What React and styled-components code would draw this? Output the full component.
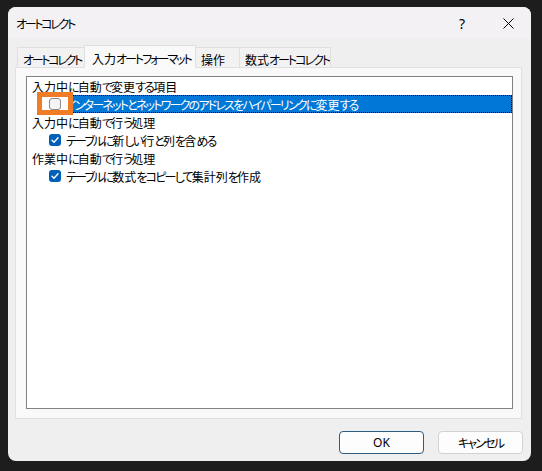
import React from "react";
import styled, { createGlobalStyle } from "styled-components";

const Global = createGlobalStyle`
  html, body { margin: 0; padding: 0; background: #1d1d1d; }
  body {
    font-family: "Noto Sans CJK JP", "Noto Sans", sans-serif;
    font-feature-settings: "palt";
    color: #000;
  }
  * { box-sizing: border-box; }
`;

const Kana = styled.span`
  letter-spacing: ${(p) => p.$ls || -1.8}px;
`;

const Kanji = styled.span`
  letter-spacing: 0;
`;

const Jp = ({ children, ls }) => {
  const parts = String(children).split(/([\u3400-\u9fff々]+)/).filter(Boolean);
  return (
    <Kana $ls={ls}>
      {parts.map((p, i) =>
        /[\u3400-\u9fff々]/.test(p) ? <Kanji key={i}>{p}</Kanji> : <React.Fragment key={i}>{p}</React.Fragment>
      )}
    </Kana>
  );
};

const Window = styled.div`
  margin: 7px 0 0 8px;
  width: 523px;
  height: 454px;
  background: #efefef;
  border-radius: 8px;
  overflow: hidden;
  display: flex;
  flex-direction: column;
`;

const TitleBar = styled.div`
  height: 31px;
  display: flex;
  align-items: center;
  padding: 1px 0 0 8px;
  background: #f3f1f4;
  font-size: 12px;
`;

const TitleText = styled.div`
  flex: 1;
`;

const TitleButton = styled.div`
  width: ${(p) => p.$w}px;
  height: 30px;
  display: flex;
  align-items: center;
  justify-content: center;
  font-family: "Noto Sans", sans-serif;
  font-size: 14px;
`;

const Body = styled.div`
  display: flex;
  flex-direction: column;
  padding: 7px 9px 0 7px;
`;

const TabStrip = styled.div`
  height: 22px;
  display: flex;
  align-items: flex-end;
  padding-left: 2px;
`;

const Tab = styled.div`
  position: relative;
  width: ${(p) => p.$w}px;
  height: ${(p) => (p.$active ? 23 : 20)}px;
  margin-bottom: ${(p) => (p.$active ? -1 : 0)}px;
  margin-left: -1px;
  z-index: ${(p) => (p.$active ? 1 : 0)};
  background: ${(p) => (p.$active ? "#f9f9f9" : "#f2f2f2")};
  border: 1px solid #dfdfdf;
  border-bottom: none;
  display: flex;
  align-items: center;
  padding: ${(p) => (p.$active ? "3px 0 0 7px" : "3px 0 0 5px")};
  font-size: 12px;
  white-space: nowrap;
  overflow: hidden;
  &:first-child { margin-left: 0; }
`;

const Panel = styled.div`
  height: 352px;
  background: #f9f9f9;
  border: 1px solid #e0e0e0;
  padding: 8px 8px 9px 10px;
  display: flex;
`;

const ListBox = styled.div`
  flex: 1;
  background: #fff;
  border: 1px solid #828282;
  display: flex;
  flex-direction: column;
`;

const HeaderRow = styled.div`
  height: 18px;
  display: flex;
  align-items: center;
  padding-left: 5px;
  font-size: 12px;
  white-space: nowrap;
`;

const ItemRow = styled.div`
  height: 18px;
  display: flex;
  align-items: center;
  padding-left: 22px;
  font-size: 12px;
`;

const CheckSlot = styled.div`
  position: relative;
  width: 12px;
  height: 18px;
  margin-right: 4px;
  display: flex;
  align-items: center;
`;

const Highlight = styled.div`
  position: absolute;
  left: -12px;
  top: -3px;
  width: 36px;
  height: 23px;
  border: 5px solid #f07d26;
  background: #fff;
  z-index: 2;
`;

const Box = styled.div`
  position: relative;
  z-index: 3;
  width: 12px;
  height: 12px;
  border-radius: 3px;
  background: ${(p) => (p.$checked ? "#005fb8" : "#f4f4f4")};
  border: ${(p) => (p.$checked ? "none" : "1px solid #8a8a8a")};
  display: flex;
  align-items: center;
  justify-content: center;
`;

const Label = styled.div`
  flex: 1;
  height: 18px;
  display: flex;
  align-items: center;
  padding-left: 1px;
  background: ${(p) => (p.$selected ? "#0078d7" : "transparent")};
  color: ${(p) => (p.$selected ? "#fff" : "#000")};
  outline: ${(p) => (p.$selected ? "1px dotted #000" : "none")};
  outline-offset: -1px;
  white-space: nowrap;
`;

const Footer = styled.div`
  display: flex;
  justify-content: flex-end;
  gap: 14px;
  padding: 12px 8px 0 0;
`;

const Button = styled.div`
  width: 85px;
  height: 23px;
  border-radius: 4px;
  background: #fdfdfd;
  border: 1px solid ${(p) => (p.$primary ? "#2f5d80" : "#d3d3d3")};
  display: flex;
  align-items: center;
  justify-content: center;
  font-size: 12px;
  font-family: "Noto Sans", "Noto Sans CJK JP", sans-serif;
`;

const Check = ({ checked }) => (
  <Box $checked={checked}>
    {checked && (
      <svg width="10" height="10" viewBox="0 0 10 10">
        <polyline points="2,5.2 4,7.2 8,2.8" fill="none" stroke="#fff" strokeWidth="1.4" strokeLinecap="round" strokeLinejoin="round" />
      </svg>
    )}
  </Box>
);

const Item = ({ checked, selected, highlight, children }) => (
  <ItemRow>
    <CheckSlot>
      {highlight && <Highlight />}
      <Check checked={checked} />
    </CheckSlot>
    <Label $selected={selected}>
      <Jp>{children}</Jp>
    </Label>
  </ItemRow>
);

export default function App() {
  return (
    <>
      <Global />
      <Window>
        <TitleBar>
          <TitleText>
            <Jp ls={-2.3}>オートコレクト</Jp>
          </TitleText>
          <TitleButton $w={46}>?</TitleButton>
          <TitleButton $w={46}>
            <svg width="11" height="11" viewBox="0 0 11 11">
              <path d="M0.5 0.5 L10.5 10.5 M10.5 0.5 L0.5 10.5" stroke="#000" strokeWidth="1" />
            </svg>
          </TitleButton>
        </TitleBar>
        <Body>
          <TabStrip>
            <Tab $w={68}><Jp ls={-2.3}>オートコレクト</Jp></Tab>
            <Tab $w={112} $active><Jp ls={-2}>入力オートフォーマット</Jp></Tab>
            <Tab $w={45}><Jp>操作</Jp></Tab>
            <Tab $w={92}><Jp ls={-2}>数式オートコレクト</Jp></Tab>
          </TabStrip>
          <Panel>
            <ListBox>
              <HeaderRow><Jp>入力中に自動で変更する項目</Jp></HeaderRow>
              <Item selected highlight>インターネットとネットワークのアドレスをハイパーリンクに変更する</Item>
              <HeaderRow><Jp>入力中に自動で行う処理</Jp></HeaderRow>
              <Item checked>テーブルに新しい行と列を含める</Item>
              <HeaderRow><Jp>作業中に自動で行う処理</Jp></HeaderRow>
              <Item checked>テーブルに数式をコピーして集計列を作成</Item>
            </ListBox>
          </Panel>
        </Body>
        <Footer>
          <Button $primary>OK</Button>
          <Button><Jp>キャンセル</Jp></Button>
        </Footer>
      </Window>
    </>
  );
}
